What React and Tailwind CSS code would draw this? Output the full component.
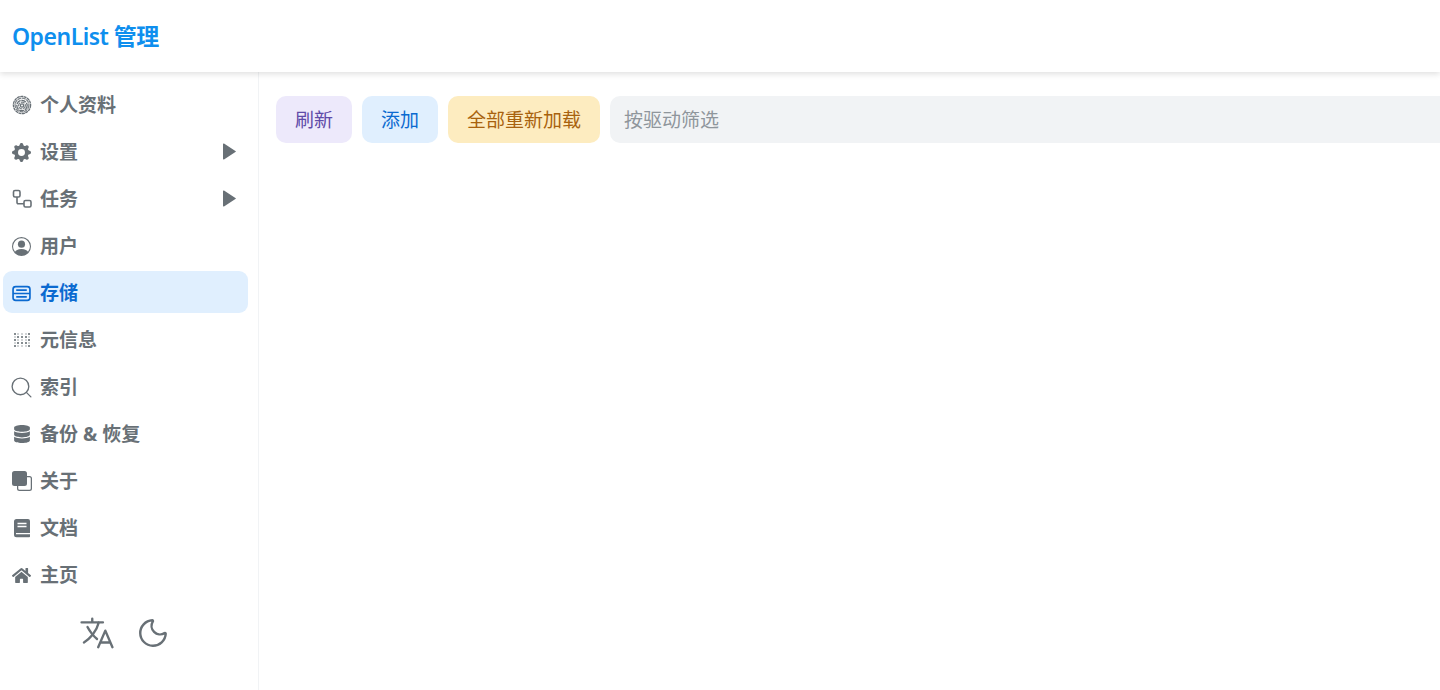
import { BsGearFill, BsPersonCircle, BsFront } from "react-icons/bs";
import { FaDatabase, FaHome } from "react-icons/fa";
import { IoLanguageOutline } from "react-icons/io5";
import { Search, Moon } from "lucide-react";

const FingerprintIcon = () => (
  <svg width="20" height="20" viewBox="0 0 20 20" fill="none" stroke="currentColor" strokeWidth="1.3">
    <circle cx="10" cy="10" r="8.6" strokeDasharray="3 0.5" />
    <circle cx="10" cy="10" r="6.9" strokeDasharray="4 0.6" opacity="0.85" />
    <circle cx="10" cy="10.5" r="5.2" strokeDasharray="5 0.8" />
    <circle cx="10" cy="10.5" r="3.4" strokeDasharray="4 0.8" opacity="0.85" />
    <circle cx="10" cy="10.5" r="1.6" />
  </svg>
);

const TaskIcon = () => (
  <svg width="20" height="20" viewBox="0 0 20 20" fill="none" stroke="currentColor" strokeWidth="1.6">
    <rect x="1.5" y="1.5" width="6.5" height="6.5" rx="1.5" />
    <rect x="12" y="11.5" width="7" height="6.5" rx="1.5" />
    <path d="M5 8v5.5a1.2 1.2 0 0 0 1.2 1.2H12" />
  </svg>
);

const StorageIcon = () => (
  <svg width="19" height="19" viewBox="0 0 18 18" fill="none" stroke="currentColor" strokeWidth="1.6">
    <rect x="1" y="2.5" width="16" height="13" rx="2.5" />
    <path d="M1 9h16M4 5.8h10M4 12.2h10" />
  </svg>
);

const MetaIcon = () => (
  <svg width="18" height="18" viewBox="0 0 18 18" fill="currentColor">
    {[3, 6, 9, 12, 15].map((y) =>
      [2, 5, 9, 13, 16].map((x) => (
        <rect key={`${x}-${y}`} x={x - 1} y={y - 1} width="2" height="2" opacity={(x + y) % 2 ? 0.8 : 0.3} />
      ))
    )}
  </svg>
);

const BookIcon = () => (
  <svg width="18" height="20" viewBox="0 0 18 20" fill="currentColor">
    <path d="M3.5 1H15a2 2 0 0 1 2 2v15.5a.8.8 0 0 1-.8.8H3.5A2.5 2.5 0 0 1 1 16.8V3.5A2.5 2.5 0 0 1 3.5 1z" />
    <path d="M4.5 5.5h9M4.5 8.5h9M3 15.6h14" stroke="#fff" strokeWidth="1.3" fill="none" />
  </svg>
);

const ArrowIcon = () => (
  <svg width="14" height="17" viewBox="0 0 14 17" fill="currentColor" className="-mt-[2px]">
    <path d="M1 1.2v14.6a.7.7 0 0 0 1 .6l11.4-7.3a.7.7 0 0 0 0-1.2L2 .6a.7.7 0 0 0-1 .6z" />
  </svg>
);

const menu = [
  { label: "个人资料", icon: <FingerprintIcon /> },
  { label: "设置", icon: <BsGearFill size={19} />, arrow: true },
  { label: "任务", icon: <TaskIcon />, arrow: true },
  { label: "用户", icon: <BsPersonCircle size={19} /> },
  { label: "存储", icon: <StorageIcon />, active: true },
  { label: "元信息", icon: <MetaIcon /> },
  { label: "索引", icon: <Search size={25} strokeWidth={1.3} className="shrink-0" /> },
  { label: "备份 & 恢复", icon: <FaDatabase size={18} /> },
  { label: "关于", icon: <BsFront size={20} /> },
  { label: "文档", icon: <BookIcon /> },
  { label: "主页", icon: <FaHome size={19} /> },
];

export default function App() {
  return (
    <div className="h-screen flex flex-col overflow-hidden bg-white font-['Noto_Sans','Noto_Sans_CJK_SC',sans-serif]">
      {/* header */}
      <header className="h-[72px] shrink-0 flex items-center pl-[12px] shadow-[0_2px_6px_rgba(0,0,0,0.13)] z-10 bg-white">
        <h1 className="text-[23px] font-semibold tracking-[-0.5px] text-[#0f8fee]">OpenList 管理</h1>
      </header>

      <div className="flex-1 flex min-h-0">
        {/* sidebar */}
        <aside className="w-[259px] shrink-0 border-r border-[#f1f3f5] pt-[11px] pl-[3px] pr-[10px] flex flex-col">
          <nav className="flex flex-col gap-[5px]">
            {menu.map((item) => (
              <div
                key={item.label}
                className={`h-[42px] flex items-center pt-[2px] pl-[8px] pr-[12px] rounded-[9px] text-[19px] font-bold ${
                  item.active ? "bg-[#e0effe] text-[#0b6ad0]" : "text-[#687076]"
                }`}
              >
                <span className="w-[21px] h-[21px] flex items-center justify-center shrink-0">{item.icon}</span>
                <span className="ml-[8px] flex-1 whitespace-nowrap">{item.label}</span>
                {item.arrow && <ArrowIcon />}
              </div>
            ))}
          </nav>
          <div className="mt-[19px] flex items-center justify-center gap-[20px] pr-[3px] text-[#687076]">
            <IoLanguageOutline size={38} />
            <Moon size={34} strokeWidth={1.7} />
          </div>
        </aside>

        {/* content */}
        <main className="flex-1 min-w-0 pl-[17px] pt-[24px]">
          <div className="flex gap-[10px] h-[47px] text-[19px]">
            <button className="w-[76px] pt-[2px] rounded-[10px] bg-[#ede9fb] text-[#5f4ba8]">刷新</button>
            <button className="w-[76px] pt-[2px] rounded-[10px] bg-[#e0effe] text-[#0b6ad0]">添加</button>
            <button className="w-[152px] pt-[2px] rounded-[10px] bg-[#fdecc0] text-[#a8620e]">全部重新加载</button>
            <input
              placeholder="按驱动筛选"
              className="flex-1 min-w-0 pt-[2px] rounded-l-[10px] bg-[#f1f3f5] pl-[14px] outline-none placeholder:text-[#8f969c]"
            />
          </div>
        </main>
      </div>
    </div>
  );
}
